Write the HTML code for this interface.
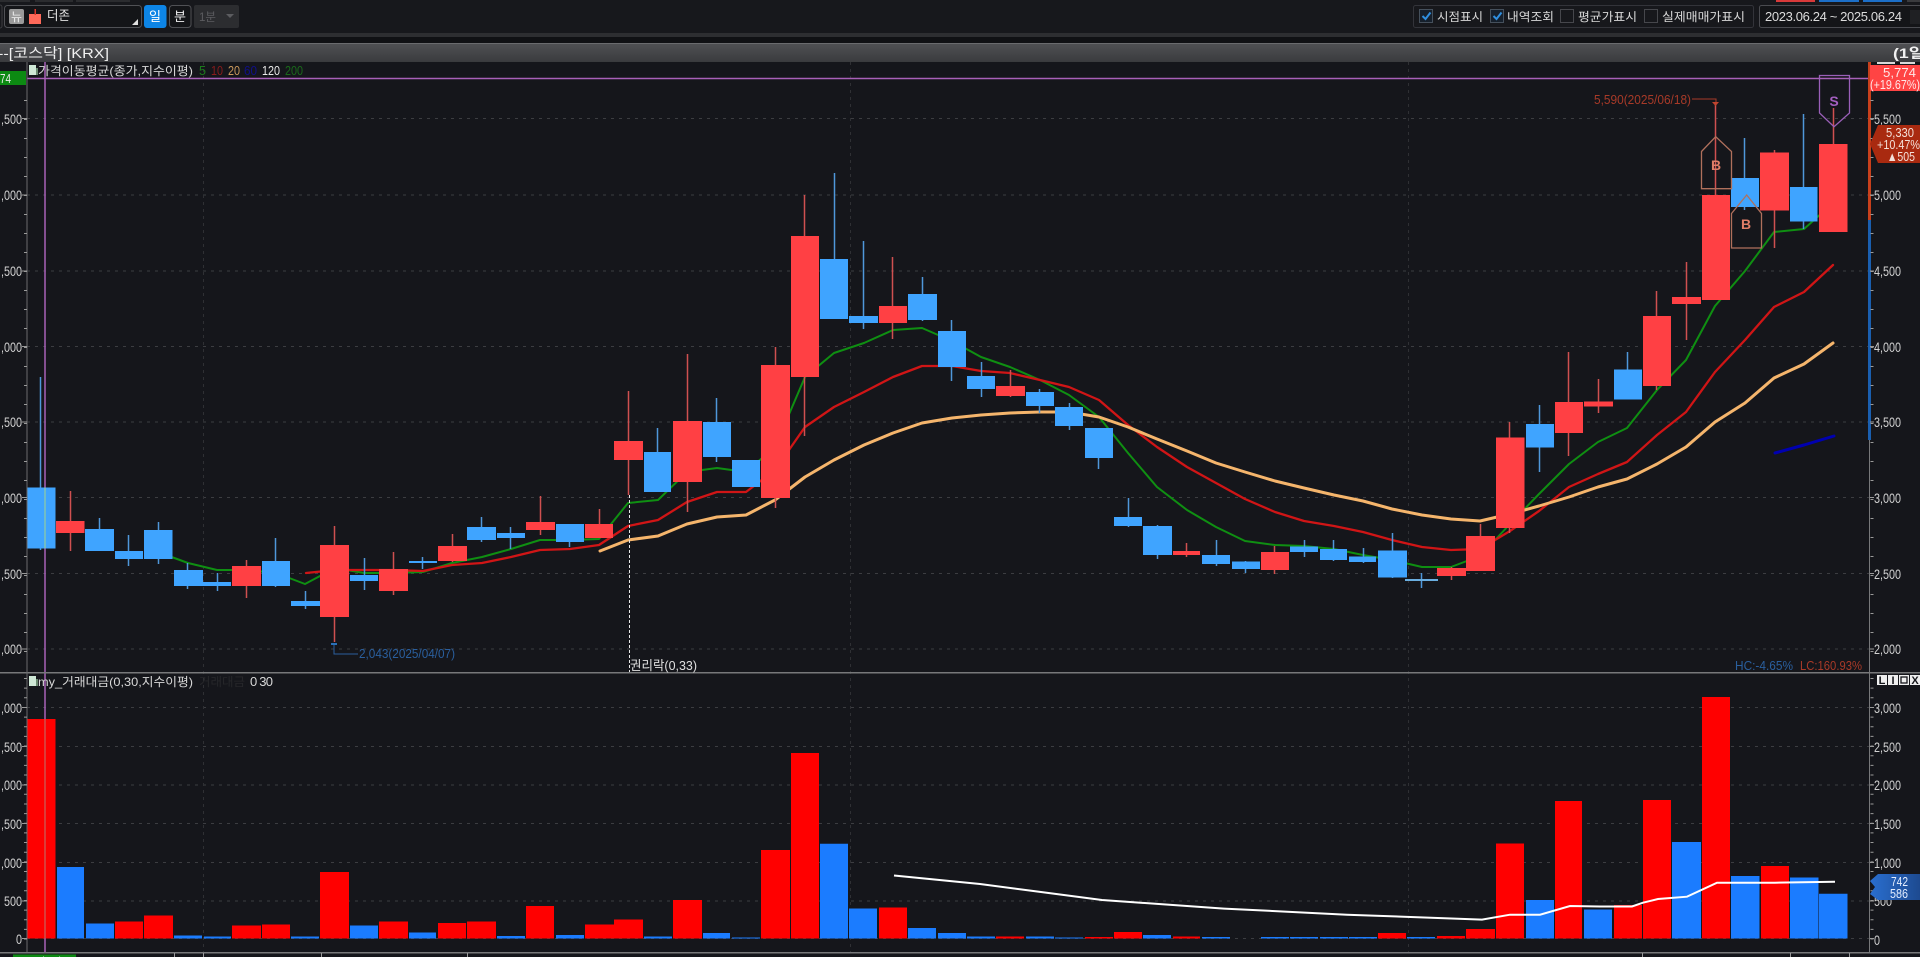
<!DOCTYPE html>
<html lang="ko">
<head>
<meta charset="utf-8">
<title>Chart</title>
<style>
html,body{margin:0;padding:0;width:1920px;height:957px;overflow:hidden;background:#15161b}
svg{display:block;font-family:"Liberation Sans","Noto Sans CJK KR",sans-serif}
.ax{fill:#d2d2d2;font-size:14px}
.ko{fill:#d8d8d8;font-size:12px}
</style>
</head>
<body>
<svg width="1920" height="957" viewBox="0 0 1920 957" xmlns="http://www.w3.org/2000/svg">
<defs>
<linearGradient id="hd" x1="0" y1="0" x2="0" y2="1"><stop offset="0" stop-color="#505154"/><stop offset="1" stop-color="#3a3b3e"/></linearGradient>
<linearGradient id="bl" x1="0" y1="0" x2="1" y2="0"><stop offset="0" stop-color="#2a6fd0"/><stop offset="1" stop-color="#1d4a90"/></linearGradient>
</defs>
<rect width="1920" height="957" fill="#15161b"/>

<!-- top toolbar -->
<rect width="1920" height="33" fill="#17181c"/>
<rect y="33" width="1920" height="4" fill="#2d2e31"/>
<rect y="37" width="1920" height="6" fill="#101114"/>
<g fill="#2b2c2f"><rect x="0" y="0" width="30" height="2"/><rect x="35" y="0" width="38" height="2"/><rect x="76" y="0" width="54" height="2"/></g>
<rect x="1776" y="0" width="39" height="2" fill="#d93a3a"/><rect x="1819" y="0" width="40" height="2" fill="#1c6fc8"/><rect x="1863" y="0" width="39" height="2" fill="#1c6fc8"/><rect x="1907" y="0" width="13" height="2" fill="#3a3b3e"/>
<rect x="-3" y="5" width="5" height="23" rx="2" fill="none" stroke="#3c3d40"/>
<rect x="4.500" y="5.500" width="137" height="22" rx="3" fill="#141518" stroke="#505155"/>
<rect x="9" y="9" width="15" height="15" rx="2" fill="#9a9a9a"/>
<text x="11" y="21" font-size="12" fill="#efefef" textLength="11" lengthAdjust="spacingAndGlyphs">뉴</text>
<rect x="29" y="14" width="12" height="10" fill="#ff6a5a"/><rect x="34.500" y="9" width="1.500" height="6" fill="#d8362a"/>
<text x="47" y="20" font-size="13" fill="#e0e0e0" textLength="23" lengthAdjust="spacingAndGlyphs">더존</text>
<path d="M138 25h-6l6-6z" fill="#e0e0e0"/>
<rect x="144" y="5" width="22.500" height="23" rx="3" fill="#0d85e6"/>
<text x="149" y="21" font-size="13" fill="#fff" textLength="12" lengthAdjust="spacingAndGlyphs">일</text>
<rect x="169.500" y="5.500" width="21.500" height="22" rx="3" fill="#141518" stroke="#505155"/>
<text x="174" y="21" font-size="13" fill="#f0f0f0" textLength="12" lengthAdjust="spacingAndGlyphs">분</text>
<rect x="194" y="5" width="45" height="23" rx="2" fill="#2c2d30"/>
<text x="199" y="21" font-size="12" fill="#5c5d60" textLength="17" lengthAdjust="spacingAndGlyphs">1분</text>
<path d="M226 14h8l-4 4z" fill="#5c5d60"/>

<rect x="1413.500" y="5.500" width="340" height="22" rx="2" fill="#17181c" stroke="#33343a"/>
<g fill="#16202c" stroke="#45505c"><rect x="1419.500" y="9.500" width="13" height="13"/><rect x="1490.500" y="9.500" width="13" height="13"/></g>
<g fill="none" stroke="#2f8fe0" stroke-width="2"><path d="M1422.500 16l3 3 5-6.500"/><path d="M1493.500 16l3 3 5-6.500"/></g>
<g fill="#17181c" stroke="#46474c"><rect x="1560.500" y="9.500" width="13" height="13"/><rect x="1644.500" y="9.500" width="13" height="13"/></g>
<g class="ko"><text class="ko" x="1437" y="21" textLength="46" lengthAdjust="spacingAndGlyphs">시점표시</text>
<text class="ko" x="1507" y="21" textLength="47" lengthAdjust="spacingAndGlyphs">내역조회</text>
<text class="ko" x="1578" y="21" textLength="59" lengthAdjust="spacingAndGlyphs">평균가표시</text>
<text class="ko" x="1662" y="21" textLength="83" lengthAdjust="spacingAndGlyphs">실제매매가표시</text></g>
<rect x="1759.500" y="5.500" width="170" height="22" rx="2" fill="#141518" stroke="#4a4b50"/>
<text x="1765" y="21" font-size="13" fill="#dcdcdc" textLength="137" lengthAdjust="spacing">2023.06.24 ~ 2025.06.24</text>
<rect x="1910" y="10" width="10" height="14" fill="#1f2023"/>

<!-- header bar -->
<rect y="43" width="1920" height="19" fill="url(#hd)"/>
<rect y="43" width="1920" height="1" fill="#6a6b6e"/>
<text x="-2" y="58" font-size="14" fill="#f0f0f0" textLength="111" lengthAdjust="spacingAndGlyphs">--[코스닥] [KRX]</text>
<text x="1893" y="58" font-size="14" font-weight="bold" fill="#f0f0f0" textLength="32" lengthAdjust="spacingAndGlyphs">(1일</text>

<!-- grid -->
<g stroke="#3c3d41" stroke-dasharray="3 5" fill="none">
<path d="M27 118.500H1869M27 195H1869M27 271H1869M27 346.500H1869M27 422H1869M27 497.500H1869M27 573.500H1869M27 649H1869"/>
<path d="M27 707.500H1869M27 746.500H1869M27 785H1869M27 823.500H1869M27 862.500H1869M27 901H1869M27 938.500H1869"/>
<path d="M203.500 62V952M850.500 62V952M1408.500 62V952" stroke="#2f3034" stroke-dasharray="3 4"/>
</g>

<!-- moving averages -->
<g fill="none" stroke-linejoin="round" stroke-linecap="round">
<polyline stroke="#0f8f12" stroke-width="2" points="158,552 188,563 217,570 247,570 276,573 305,584 335,568 364,573 393,573 423,572 452,563 482,557 511,549 540,540 570,540 599,539 628,503 658,500 687,472 717,468 746,472 775,447 805,377 834,353 864,343 893,330 922,328 952,341 981,357 1010,367 1040,380 1069,395 1099,417 1128,453 1157,487 1187,510 1216,527 1245,541 1275,545 1304,546 1334,549 1363,555 1392,560 1422,567 1451,567 1480,556 1510,524 1539,494 1569,464 1598,442 1627,428 1657,390 1686,360 1715,306 1745,271 1774,232 1804,229 1833,203"/>
<polyline stroke="#d01516" stroke-width="2.300" points="306,573 335,570 364,570 393,570 423,571 452,565 482,563 511,557 540,550 570,549 599,545 628,526 658,520 687,502 717,492 746,492 775,470 805,427 834,407 864,392 893,377 922,366 952,366 981,371 1010,373 1040,380 1069,387 1099,400 1128,425 1157,447 1187,467 1216,483 1245,499 1275,512 1304,521 1334,526 1363,532 1392,540 1422,547 1451,550 1480,549 1510,531 1539,511 1569,487 1598,474 1627,462 1657,435 1686,412 1715,372 1745,340 1774,307 1804,292 1833,265"/>
<polyline stroke="#f5b56c" stroke-width="3" points="600,551 628,540 658,536 687,524 717,517 746,515 775,500 805,477 834,460 864,445 893,433 922,423 952,418 981,415 1010,413 1040,412 1069,412 1099,417 1128,427 1157,439 1187,451 1216,463 1245,472 1275,481 1304,488 1334,495 1363,501 1392,509 1422,515 1451,519 1480,521 1510,514 1539,506 1569,497 1598,487 1627,479 1657,464 1686,447 1715,422 1745,403 1774,378 1804,364 1833,343"/>
<polyline stroke="#0000b0" stroke-width="3" points="1775,453 1804,445 1834,436"/>
</g>

<!-- candle wicks -->
<path stroke="#cf5050" stroke-width="1.500" fill="none" d="M70.500 491V551M246.500 560V598M334.500 526V642M393.500 552V595M452.500 534V562M540.500 496V535M599.500 509V538M628.500 391V495M687.500 354V512M775.500 347V508M804.500 195V436M892.500 257V339M1010.500 370V397M1186.500 543V557M1274.500 546V574M1451.500 567V580M1480.500 524V571M1509.500 422V533M1568.500 352V456M1598.500 379V413M1656.500 291V390M1686.500 262V340M1715.500 103V300M1774.500 150V248M1833.500 108V144"/>
<path stroke="#4f97da" stroke-width="1.500" fill="none" d="M40.500 377V550M99.500 518V551M128.500 535V566M158.500 522V564M187.500 563V589M217.500 573V591M275.500 538V587M305.500 591V609M364.500 558V590M422.500 557V569M481.500 517V542M510.500 527V549M569.500 524V547M657.500 428V492M716.500 398V462M834.500 173V319M863.500 241V329M922.500 277V321M951.500 320V381M981.500 362V397M1039.500 389V413M1069.500 403V430M1098.500 428V469M1128.500 498V527M1157.500 525V559M1216.500 540V566M1245.500 561V573M1304.500 540V557M1333.500 540V561M1363.500 548V563M1392.500 533V578M1421.500 573V588M1539.500 405V472M1627.500 352V399M1744.500 138V210M1803.500 114V229"/>

<!-- candle bodies -->
<path fill="#ff4044" d="M56 521h28.500v12h-28.500zM232 566h29v20h-29zM320 545h29v72h-29zM379 569h29v22h-29zM438 546h29v15h-29zM526 522h29v8h-29zM585 524h28v14h-28zM614 441h29v19h-29zM673 421h29v61h-29zM761 365h29v133h-29zM791 236h28v141h-28zM879 306h28v17h-28zM996 386h29v10h-29zM1173 551h27v4h-27zM1261 552h28v18h-28zM1437 568h29v8h-29zM1466 536h29v35h-29zM1496 437.500h28.500v90.500h-28.500zM1555 402h28v31h-28zM1584 401.500h29v5h-29zM1643 316h28v70h-28zM1672 297h29v7h-29zM1702 195h28v105h-28zM1760 152.500h29v58h-29zM1819 144h28.500v88h-28.500z"/>
<path fill="#3fa4ff" d="M27 487.500h28.500v61h-28.500zM85 529h29v22h-29zM115 551h28v8h-28zM144 530h28.500v29h-28.500zM174 570h29v16h-29zM203 582h28v4h-28zM262 561h28v25h-28zM291 601h29v5h-29zM350 575h28v6h-28zM409 561h28v2h-28zM467 527h29v13h-29zM497 533h28v5h-28zM556 524h28v18h-28zM644 452h27v40h-27zM703 422h28v35h-28zM732 460h28v27h-28zM820 259h28v60h-28zM849 316h29v7h-29zM908 294h29v26h-29zM938 331h28v36h-28zM967 376h28v13h-28zM1026 392h28v14h-28zM1055 407h28v19h-28zM1085 428h28v30h-28zM1114 517h28v9h-28zM1143 526h29v29h-29zM1202 555h28v9h-28zM1232 561.500h28v7.500h-28zM1290 546.500h28v5.500h-28zM1320 549h27v11h-27zM1349 556.500h27v5.500h-27zM1378 550.500h29v27h-29zM1526 424h28v23.500h-28zM1614 369.500h28v30h-28zM1731 178h28v29h-28zM1790 187h27.500v34.500h-27.500z"/>
<rect x="1405" y="579" width="33" height="2" fill="#6aaee0"/>

<!-- volume bars -->
<path fill="#ff0000" d="M27 719h28.500v219.500h-28.500zM115 921.500h28v17h-28zM144 915.500h29v23h-29zM232 925.500h29v13h-29zM262 924.500h28v14h-28zM320 872h29v66.500h-29zM379 921.500h29v17h-29zM438 923h28v15.500h-28zM467 921.500h29v17h-29zM526 906h28v32.500h-28zM585 924.500h29v14h-29zM614 919.500h29v19h-29zM673 900h29v38.500h-29zM761 850h29v88.500h-29zM791 753h28v185.500h-28zM879 907.500h28v31h-28zM996 936.500h28v2h-28zM1085 937h28v1.500h-28zM1114 932h28v6.500h-28zM1173 936.500h27v2h-27zM1378 933h28v5.500h-28zM1437 936h28v2.500h-28zM1466 929h29v9.500h-29zM1496 843.500h28v95h-28zM1555 801h27v137.500h-27zM1614 905h28v33.500h-28zM1643 800h28v138.500h-28zM1702 697h28v241.500h-28zM1761 866h28v72.500h-28z"/>
<path fill="#1b7cff" d="M57 867h27v71.500h-27zM86 923.500h28v15h-28zM174 935.500h28v3h-28zM204 936.500h27v2h-27zM291 936.500h28v2h-28zM350 925.500h28v13h-28zM409 932.500h27v6h-27zM497 936h28v2.500h-28zM556 935h28v3.500h-28zM644 936.500h28v2h-28zM703 933h27v5.500h-27zM732 937.500h28v1h-28zM820 843.700h28v94.800h-28zM849 908.500h28v30h-28zM908 928h28v10.500h-28zM938 933h28v5.500h-28zM967 936.500h28v2h-28zM1026 936.500h28v2h-28zM1055 937.500h28v1h-28zM1143 935h28v3.500h-28zM1202 937h28v1.500h-28zM1261 937h28v1.500h-28zM1290 937h28v1.500h-28zM1320 937h28v1.500h-28zM1349 937h28v1.500h-28zM1407 937h28v1.500h-28zM1526 900h28v38.500h-28zM1584 909.500h28v29h-28zM1672 842h29v96.500h-29zM1731 876h28.500v62.500h-28.500zM1790 877.500h28.500v61h-28.500zM1819 893.700h28.500v44.800h-28.500z"/>
<polyline fill="none" stroke="#fff" stroke-width="2" points="894,875.500 980,884 1102,900 1224,908.600 1347,914.700 1482,919.600 1510,914.700 1540,914.700 1570,906 1600,906.500 1632,906.500 1643,902.700 1658,899 1687,896.700 1717,882.700 1775,882.700 1835,881.700"/>

<!-- crosshair -->
<path stroke="#a860b8" stroke-width="1.500" fill="none" d="M45 62V487.500M45 548.500V719M45 938.500V952M27 78.500H1869"/>
<path stroke="#80c4b4" stroke-width="1.500" fill="none" d="M45 487.500V548.500"/>
<path stroke="#d0504c" stroke-width="1.500" fill="none" d="M45 719V938.500"/>

<!-- frames -->
<rect y="672" width="1920" height="1.500" fill="#77787a"/>
<rect y="952" width="1920" height="1.500" fill="#77787a"/>
<rect x="26.500" y="62" width="1" height="890" fill="#6a6b6e"/>
<rect x="1869" y="62" width="1" height="890" fill="#77787a"/>
<rect x="1868" y="62" width="3" height="158" fill="#c8401c"/>
<rect x="1868" y="220" width="3" height="220" fill="#1a5fb0"/>
<g fill="#d8d8d8"><rect x="1877" y="62" width="18" height="2"/><rect x="1900" y="62" width="15" height="2"/></g>

<!-- axis ticks -->
<g stroke="#9a9a9a" fill="none">
<path d="M25.500 100V670M1872 100V670" stroke-width="3" stroke-dasharray="1 18"/>
<path d="M22 118.500h5M22 195h5M22 271h5M22 346.500h5M22 422h5M22 497.500h5M22 573.500h5M22 649h5M1870 118.500h4M1870 195h4M1870 271h4M1870 346.500h4M1870 422h4M1870 497.500h4M1870 573.500h4M1870 649h4"/>
<path d="M25.500 678V940M1872 678V940" stroke-width="3" stroke-dasharray="1 8.650"/>
<path d="M22 707.500h5M22 746.500h5M22 785h5M22 823.500h5M22 862.500h5M22 901h5M22 938.500h5M1870 707.500h4M1870 746.500h4M1870 785h4M1870 823.500h4M1870 862.500h4M1870 901h4M1870 938.500h4"/>
<path d="M174.500 953v4M203.500 953v4M321.500 953v4M467.500 953v4M1642.500 953v4M1790.500 953v4M1849.500 953v4"/>
</g>
<rect x="13" y="954.500" width="63" height="3" fill="#0c8a12"/>
<text x="15" y="966" font-size="13" fill="#e8e8e8" textLength="58" lengthAdjust="spacingAndGlyphs">2025/03/04</text>

<!-- left labels -->
<g class="ax" text-anchor="end">
<text class="ax" x="22" y="124" textLength="21" lengthAdjust="spacingAndGlyphs">,500</text>
<text class="ax" x="22" y="200" textLength="21" lengthAdjust="spacingAndGlyphs">,000</text>
<text class="ax" x="22" y="276" textLength="21" lengthAdjust="spacingAndGlyphs">,500</text>
<text class="ax" x="22" y="352" textLength="21" lengthAdjust="spacingAndGlyphs">,000</text>
<text class="ax" x="22" y="427" textLength="21" lengthAdjust="spacingAndGlyphs">,500</text>
<text class="ax" x="22" y="503" textLength="21" lengthAdjust="spacingAndGlyphs">,000</text>
<text class="ax" x="22" y="579" textLength="21" lengthAdjust="spacingAndGlyphs">,500</text>
<text class="ax" x="22" y="654" textLength="21" lengthAdjust="spacingAndGlyphs">,000</text>
<text class="ax" x="22" y="713" textLength="21" lengthAdjust="spacingAndGlyphs">,000</text>
<text class="ax" x="22" y="752" textLength="21" lengthAdjust="spacingAndGlyphs">,500</text>
<text class="ax" x="22" y="790" textLength="21" lengthAdjust="spacingAndGlyphs">,000</text>
<text class="ax" x="22" y="829" textLength="21" lengthAdjust="spacingAndGlyphs">,500</text>
<text class="ax" x="22" y="868" textLength="21" lengthAdjust="spacingAndGlyphs">,000</text>
<text class="ax" x="22" y="906" textLength="18" lengthAdjust="spacingAndGlyphs">500</text>
<text class="ax" x="22" y="944" textLength="6" lengthAdjust="spacingAndGlyphs">0</text>
</g>

<!-- right labels -->
<g>
<text class="ax" x="1874" y="124" textLength="27" lengthAdjust="spacingAndGlyphs">5,500</text>
<text class="ax" x="1874" y="200" textLength="27" lengthAdjust="spacingAndGlyphs">5,000</text>
<text class="ax" x="1874" y="276" textLength="27" lengthAdjust="spacingAndGlyphs">4,500</text>
<text class="ax" x="1874" y="352" textLength="27" lengthAdjust="spacingAndGlyphs">4,000</text>
<text class="ax" x="1874" y="427" textLength="27" lengthAdjust="spacingAndGlyphs">3,500</text>
<text class="ax" x="1874" y="503" textLength="27" lengthAdjust="spacingAndGlyphs">3,000</text>
<text class="ax" x="1874" y="579" textLength="27" lengthAdjust="spacingAndGlyphs">2,500</text>
<text class="ax" x="1874" y="654" textLength="27" lengthAdjust="spacingAndGlyphs">2,000</text>
<text class="ax" x="1874" y="713" textLength="27" lengthAdjust="spacingAndGlyphs">3,000</text>
<text class="ax" x="1874" y="752" textLength="27" lengthAdjust="spacingAndGlyphs">2,500</text>
<text class="ax" x="1874" y="790" textLength="27" lengthAdjust="spacingAndGlyphs">2,000</text>
<text class="ax" x="1874" y="829" textLength="27" lengthAdjust="spacingAndGlyphs">1,500</text>
<text class="ax" x="1874" y="868" textLength="27" lengthAdjust="spacingAndGlyphs">1,000</text>
<text class="ax" x="1874" y="906" textLength="18" lengthAdjust="spacingAndGlyphs">500</text>
<text class="ax" x="1874" y="945" textLength="6" lengthAdjust="spacingAndGlyphs">0</text>
</g>

<!-- price tags -->
<rect x="0" y="71" width="26" height="14" fill="#0c8a12"/>
<text x="0" y="83" font-size="13" fill="#eaeaea" textLength="11" lengthAdjust="spacingAndGlyphs">74</text>
<rect x="1870" y="65" width="50" height="26" fill="#ff4444"/>
<text x="1883" y="77" font-size="13" fill="#ffe6e6" textLength="33" lengthAdjust="spacingAndGlyphs">5,774</text>
<text x="1870" y="89" font-size="13" fill="#ffe6e6" textLength="50" lengthAdjust="spacingAndGlyphs">(+19.67%)</text>
<path d="M1878 125H1920V163H1878L1870 144z" fill="#a92a10"/>
<text x="1886" y="137" font-size="13" fill="#f4e0d8" textLength="28" lengthAdjust="spacingAndGlyphs">5,330</text>
<text x="1877" y="149" font-size="13" fill="#f4e0d8" textLength="43" lengthAdjust="spacingAndGlyphs">+10.47%</text>
<text x="1887" y="161" font-size="13" fill="#f4e0d8" textLength="28" lengthAdjust="spacingAndGlyphs">▲505</text>
<path d="M1878 874H1920V900H1878L1870 894 1875 887 1870 881z" fill="url(#bl)"/>
<text x="1891" y="886" font-size="13" fill="#e4eeff" textLength="17" lengthAdjust="spacingAndGlyphs">742</text>
<text x="1890" y="898" font-size="13" fill="#e4eeff" textLength="18" lengthAdjust="spacingAndGlyphs">586</text>

<!-- legends -->
<rect x="29" y="65" width="7" height="10" fill="#cfe8d6"/><rect x="36" y="68" width="2" height="7" fill="#6a8a70"/>
<text class="ko" x="38" y="75" font-size="13" textLength="155" lengthAdjust="spacingAndGlyphs">가격이동평균(종가,지수이평)</text>
<g font-size="13">
<text x="199" y="75" fill="#1c7a1c" textLength="7" lengthAdjust="spacingAndGlyphs">5</text>
<text x="211" y="75" fill="#8a1c1c" textLength="12" lengthAdjust="spacingAndGlyphs">10</text>
<text x="228" y="75" fill="#c9985c" textLength="12" lengthAdjust="spacingAndGlyphs">20</text>
<text x="244" y="75" fill="#10108a" textLength="13" lengthAdjust="spacingAndGlyphs">60</text>
<text x="262" y="75" fill="#e8e8e8" textLength="18" lengthAdjust="spacingAndGlyphs">120</text>
<text x="285" y="75" fill="#1a6a1a" textLength="18" lengthAdjust="spacingAndGlyphs">200</text>
</g>
<rect x="29" y="676" width="7" height="10" fill="#cfe8d6"/><rect x="36" y="679" width="2" height="7" fill="#6a8a70"/>
<text class="ko" x="38" y="686" font-size="13" textLength="155" lengthAdjust="spacingAndGlyphs">my_거래대금(0,30,지수이평)</text>
<text x="199" y="686" font-size="12" fill="#26272a" textLength="46" lengthAdjust="spacingAndGlyphs">거래대금</text>
<text x="250" y="686" font-size="13" fill="#d8d8d8" textLength="23" lengthAdjust="spacing">0 30</text>

<!-- annotations -->
<text x="1594" y="104" font-size="13" fill="#a83a28" textLength="97" lengthAdjust="spacingAndGlyphs">5,590(2025/06/18)</text>
<path d="M1692 99h24v6" stroke="#a83a28" fill="none"/><path d="M1712 102h7l-3.500 4z" fill="#c0442e"/>
<text x="359" y="658" font-size="13" fill="#2a5f9e" textLength="96" lengthAdjust="spacingAndGlyphs">2,043(2025/04/07)</text>
<path d="M358 654h-24v-9" stroke="#2a5f9e" fill="none"/><path d="M331 644h6" stroke="#2a70b8" stroke-width="2"/>
<path d="M629.500 495V672" stroke="#e8e8e8" stroke-dasharray="3 2" fill="none"/>
<text x="630" y="670" font-size="13" fill="#e0e0e0" textLength="67" lengthAdjust="spacingAndGlyphs">권리락(0,33)</text>
<text x="1735" y="670" font-size="13" fill="#2a5f9e" textLength="58" lengthAdjust="spacingAndGlyphs">HC:-4.65%</text>
<text x="1800" y="670" font-size="13" fill="#a83a28" textLength="62" lengthAdjust="spacingAndGlyphs">LC:160.93%</text>

<!-- B / S markers -->
<g fill="none" stroke="#b0705c" stroke-width="1.300">
<path d="M1701.500 151.500L1715.700 136.700 1731.500 151.500V188.700H1701.500z"/>
<path d="M1731.500 213.500L1746.700 195 1761.500 213.500V248H1731.500z"/>
</g>
<text x="1716" y="170" font-size="14" font-weight="bold" fill="#e07e68" text-anchor="middle">B</text>
<text x="1746" y="229" font-size="14" font-weight="bold" fill="#e07e68" text-anchor="middle">B</text>
<path d="M1819.500 75.500H1849.500V113L1834 126.700 1819.500 113z" fill="none" stroke="#9a5fb8" stroke-width="1.300"/>
<text x="1834" y="106" font-size="14" font-weight="bold" fill="#a45fc0" text-anchor="middle">S</text>

<!-- chart buttons -->
<g fill="#efefef"><rect x="1877" y="675" width="10" height="10"/><rect x="1888" y="675" width="10" height="10"/><rect x="1899" y="675" width="10" height="10"/><rect x="1910" y="675" width="10" height="10"/></g>
<g font-size="11" font-weight="bold" fill="#15161b" text-anchor="middle"><text x="1882" y="684">L</text><text x="1893" y="684">I</text><text x="1915" y="684">X</text></g>
<rect x="1901" y="677" width="6" height="6" fill="none" stroke="#15161b" stroke-width="1.300"/>
</svg>
</body>
</html>
